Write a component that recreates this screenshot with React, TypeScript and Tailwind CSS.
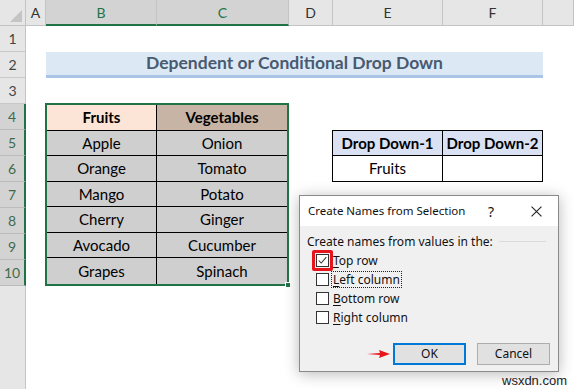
const colHeaders = [
  { label: 'A', sel: false },
  { label: 'B', sel: true },
  { label: 'C', sel: true },
  { label: 'D', sel: false },
  { label: 'E', sel: false },
  { label: 'F', sel: false },
  { label: '', sel: false },
];

const rows = [
  ['Apple', 'Onion'],
  ['Orange', 'Tomato'],
  ['Mango', 'Potato'],
  ['Cherry', 'Ginger'],
  ['Avocado', 'Cucumber'],
  ['Grapes', 'Spinach'],
];

const options = [
  { key: 'T', rest: 'op row', checked: true },
  { key: 'L', rest: 'eft column', focus: true },
  { key: 'B', rest: 'ottom row' },
  { key: 'R', rest: 'ight column' },
];

function CheckRow({ opt }: { opt: (typeof options)[number] }) {
  return (
    <div className="flex items-center h-[19px]">
      <div className="relative w-[13px] h-[13px] bg-white border border-[#333] shrink-0">
        {opt.checked && (
          <>
            <svg viewBox="0 0 13 13" className="absolute inset-0 w-full h-full">
              <path d="M2 6.5 L5 9.5 L11 2.5" fill="none" stroke="#333" strokeWidth="1.2" />
            </svg>
            {/* red highlight box */}
            <div className="absolute -inset-[5px] border-[3px] border-[#e8141c] rounded-[2px]" />
          </>
        )}
      </div>
      <span
        className={
          opt.focus
            ? 'ml-[3px] px-[1px] leading-[15px] outline outline-1 outline-dotted outline-[#222]'
            : 'ml-[4px] leading-[15px]'
        }
      >
        <span className="underline underline-offset-2">{opt.key}</span>
        {opt.rest}
      </span>
    </div>
  );
}

export default function App() {
  return (
    <div className="relative w-[574px] h-[389px] overflow-hidden bg-white text-black font-['Lato',sans-serif]">
      <div className="grid h-full grid-cols-[26px_20px_111px_132px_44px_110px_100px_31px] grid-rows-[26px_repeat(10,26px)_1fr]">
        {/* corner */}
        <div className="col-start-1 row-start-1 relative bg-[#e6e6e6] border-r border-b border-[#c4c4c4]">
          <div className="absolute right-[3px] bottom-[3px] w-0 h-0 border-l-[12px] border-l-transparent border-b-[12px] border-b-[#c4c4c4]" />
        </div>
        {colHeaders.map((c, i) => (
          <div
            key={i}
            className={
              c.sel
                ? 'row-start-1 flex items-center justify-center text-[14px] bg-[#d3d3d3] text-[#217346] border-r border-r-[#c4c4c4] border-b-2 border-b-[#217346]'
                : 'row-start-1 flex items-center justify-center text-[14px] bg-[#e6e6e6] text-[#333] border-r border-r-[#c4c4c4] border-b border-b-[#c4c4c4]'
            }
          >
            {c.label}
          </div>
        ))}
        {Array.from({ length: 10 }, (_, i) => {
          const sel = i >= 3;
          return (
            <div
              key={i}
              className={
                sel
                  ? 'col-start-1 flex items-center justify-center text-[14px] bg-[#d3d3d3] text-[#3f6b4d] border-b border-b-[#bcbcbc] border-r-2 border-r-[#217346]'
                  : 'col-start-1 flex items-center justify-center text-[14px] bg-[#e6e6e6] text-[#444] border-b border-b-[#c8c8c8] border-r border-r-[#c4c4c4]'
              }
              style={{ gridRowStart: i + 2 }}
            >
              {i + 1}
            </div>
          );
        })}
        <div className="col-start-1 row-start-12 bg-[#e6e6e6] border-r border-[#c4c4c4]" />

        {/* title B2:F2 */}
        <div className="col-start-3 col-span-5 row-start-3 flex items-center justify-center bg-[#dde8f5] border-b-[3px] border-[#a9c4e6] text-[17.5px] font-bold text-[#485a70]">
          Dependent or Conditional Drop Down
        </div>

        {/* data table B4:C10 */}
        <div className="col-start-3 col-span-2 row-start-5 row-span-7 relative -ml-[1px] -mt-[1px] border-2 border-[#217346] grid grid-cols-[110px_1fr] grid-rows-7 text-[15px]">
          <div className="flex items-center justify-center font-bold bg-[#fce4d6] border-r border-b border-black">Fruits</div>
          <div className="flex items-center justify-center font-bold bg-[#c7b4a4] border-b border-black">Vegetables</div>
          {rows.map((r, i) => (
            <div key={i} className="contents">
              <div
                className={
                  i < rows.length - 1
                    ? 'flex items-center justify-center bg-[#cfcfcf] border-r border-b border-black'
                    : 'flex items-center justify-center bg-[#cfcfcf] border-r border-black'
                }
              >
                {r[0]}
              </div>
              <div
                className={
                  i < rows.length - 1
                    ? 'flex items-center justify-center bg-[#cfcfcf] border-b border-black'
                    : 'flex items-center justify-center bg-[#cfcfcf]'
                }
              >
                {r[1]}
              </div>
            </div>
          ))}
          <div className="absolute -right-[4px] -bottom-[4px] w-[6px] h-[6px] bg-[#217346] border border-white" />
        </div>

        {/* drop down table E5:F6 */}
        <div className="col-start-6 col-span-2 row-start-6 row-span-2 -ml-[1px] border border-black grid grid-cols-[110px_1fr] grid-rows-2 text-[15px]">
          <div className="flex items-center justify-center font-bold bg-[#d9e1f2] border-r border-b border-black">Drop Down-1</div>
          <div className="flex items-center justify-center font-bold bg-[#d9e1f2] border-b border-black">Drop Down-2</div>
          <div className="flex items-center justify-center border-r border-black">Fruits</div>
          <div />
        </div>
      </div>

      {/* dialog */}
      <div className="absolute left-[299px] top-[195px] w-[260px] h-[177px] flex flex-col border border-[#8a8a8a] bg-[#f0f0f0] shadow-[0_2px_14px_rgba(0,0,0,0.28)] font-['Noto_Sans',sans-serif] text-[12px] text-[#111]">
        <div className="h-[30px] bg-white flex items-center pl-[8px] shrink-0">
          <span className="text-[11.5px]">Create Names from Selection</span>
          <span className="ml-auto mr-[37px] text-[14px]">?</span>
          <svg viewBox="0 0 10 10" className="w-[11px] h-[11px] mr-[16px]">
            <path d="M0.5 0.5 L9.5 9.5 M9.5 0.5 L0.5 9.5" stroke="#222" strokeWidth="1" />
          </svg>
        </div>
        <div className="flex flex-col px-[7px]">
          <div className="flex items-center mt-[7px] h-[17px]">
            <span>Create names from values in the:</span>
            <div className="flex-1 h-px bg-[#dadada] ml-[6px] mr-[5px]" />
          </div>
          <div className="flex flex-col pl-[9px] mt-[1px]">
            {options.map((o) => (
              <CheckRow key={o.key} opt={o} />
            ))}
          </div>
          <div className="flex items-center justify-end gap-[11px] mt-[16px] mr-[1px]">
            <svg viewBox="0 0 24 10" className="w-[24px] h-[10px] -mr-[9px]">
              <path d="M0 5 L13 4 L12 1 L23 5 L12 9 L13 6 Z" fill="#e8141c" />
            </svg>
            <div className="w-[73px] h-[22px] flex items-center justify-center bg-[#e1e1e1] border-2 border-[#0078d7]">OK</div>
            <div className="w-[73px] h-[22px] flex items-center justify-center bg-[#e1e1e1] border border-[#adadad]">Cancel</div>
          </div>
        </div>
      </div>

      <div className="absolute left-[502px] top-[371px] text-[13px] text-[#222] font-['Liberation_Sans',sans-serif]">wsxdn.com</div>
    </div>
  );
}
